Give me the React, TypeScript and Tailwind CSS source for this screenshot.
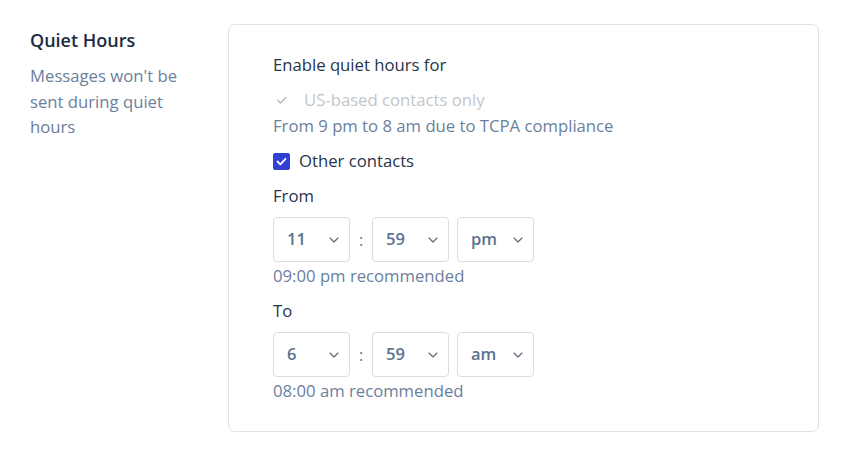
import React from "react";

const font = { fontFamily: "'Open Sans', 'Noto Sans', sans-serif" };

const Chevron = () => (
  <svg width="10" height="6" viewBox="0 0 10 6" fill="none" className="text-[#56657a]">
    <path d="M1 1l4 4 4-4" stroke="currentColor" strokeWidth="1.1" strokeLinecap="round" strokeLinejoin="round" />
  </svg>
);

const Select = ({ value }: { value: string }) => (
  <div className="flex h-[45px] w-[77px] items-center justify-between rounded-[4px] border border-[#d9dde3] bg-white pl-[13px] pr-[10px]">
    <span className="text-[16.5px] font-semibold text-[#5b7290]">{value}</span>
    <Chevron />
  </div>
);

const TimeRow = ({ h, m, p }: { h: string; m: string; p: string }) => (
  <div className="flex items-center">
    <Select value={h} />
    <span className="w-[22px] text-center text-[16px] text-[#5b7290]">:</span>
    <Select value={m} />
    <div className="w-[8px]" />
    <Select value={p} />
  </div>
);

export default function App() {
  return (
    <div className="flex min-h-[455px] bg-white pl-[30px] pt-[24px]" style={font}>
      <div className="w-[198px] pt-[4px]">
        <h2 className="text-[18px] font-semibold leading-[24px] text-[#1c2b3f]">Quiet Hours</h2>
        <p className="mt-[11px] w-[170px] text-[16.7px] leading-[25.5px] text-[#6b809c]">
          Messages won't be sent during quiet hours
        </p>
      </div>
      <div className="h-[408px] w-[591px] rounded-[7px] border border-[#dbe2ec] pl-[44px] pt-[28px]">
        <div className="text-[16.7px] leading-[24px] text-[#26354a]">Enable quiet hours for</div>
        <div className="mt-[11px] flex items-center text-[16.7px] leading-[24px] text-[#c2c6cc]">
          <svg width="16" height="16" viewBox="0 0 16 16" className="mr-[14px] ml-[1px]">
            <path d="M4 8.5l2.5 2.5L12 5.5" fill="none" stroke="#b8bcc2" strokeWidth="1.6" strokeLinecap="round" strokeLinejoin="round" />
          </svg>
          US-based contacts only
        </div>
        <div className="mt-[2px] text-[16.7px] leading-[24px] text-[#6b809c]">
          From 9 pm to 8 am due to TCPA compliance
        </div>
        <div className="mt-[11px] flex items-center text-[16.7px] leading-[24px] text-[#26354a]">
          <span className="mr-[9px] flex h-[17px] w-[17px] items-center justify-center rounded-[2px] bg-[#2f40d3]">
            <svg width="11" height="9" viewBox="0 0 11 9">
              <path d="M1.5 4.5l2.8 2.8L9.5 1.8" fill="none" stroke="white" strokeWidth="1.8" strokeLinecap="round" strokeLinejoin="round" />
            </svg>
          </span>
          Other contacts
        </div>
        <div className="mt-[11px] text-[16.7px] leading-[24px] text-[#26354a]">From</div>
        <div className="mt-[9px]">
          <TimeRow h="11" m="59" p="pm" />
        </div>
        <div className="mt-[2px] text-[16.7px] leading-[24px] text-[#6b809c]">09:00 pm recommended</div>
        <div className="mt-[11px] text-[16.7px] leading-[24px] text-[#26354a]">To</div>
        <div className="mt-[9px]">
          <TimeRow h="6" m="59" p="am" />
        </div>
        <div className="mt-[2px] text-[16.7px] leading-[24px] text-[#6b809c]">08:00 am recommended</div>
      </div>
    </div>
  );
}
